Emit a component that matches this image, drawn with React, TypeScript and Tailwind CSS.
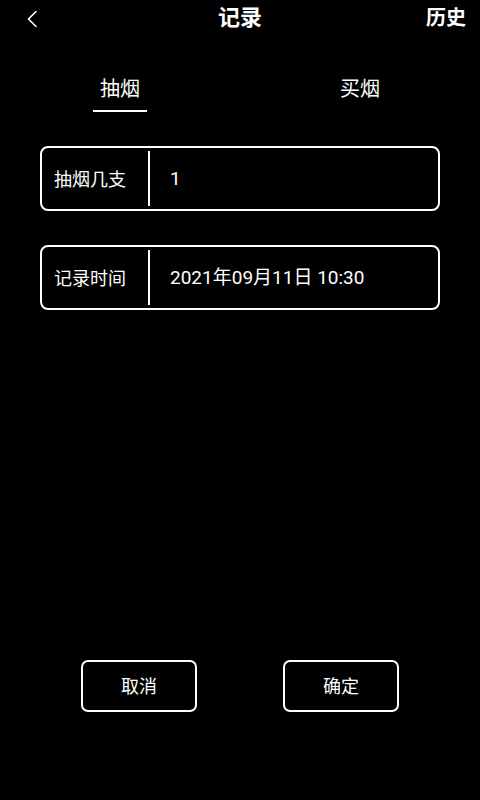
import { useState } from "react";

const font = { fontFamily: 'Roboto, "Noto Sans CJK SC", "Noto Sans", sans-serif' };

const Field = ({ label, value }: { label: string; value: string }) => (
  <div className="mx-[40px] flex h-[65px] items-center rounded-[8px] border-2 border-white">
    <div className="w-[106px] pl-[12px] pt-[2px] text-[18px] text-white">{label}</div>
    <div className="h-[55px] w-[2px] bg-white" />
    <div className="pl-[20px] pt-[2px] text-[19px] text-white">{value}</div>
  </div>
);

export default function App() {
  const [tab, setTab] = useState(0);
  const tabs = ["抽烟", "买烟"];

  return (
    <div className="flex h-[800px] w-[480px] flex-col bg-black text-white" style={font}>
      {/* header */}
      <div className="relative flex h-[38px] items-center justify-center">
        <svg className="absolute left-[26px] top-[10px]" width="12" height="18" viewBox="0 0 12 18" fill="none">
          <path d="M10 1.5 L2.5 9 L10 16.5" stroke="white" strokeWidth="1.6" strokeLinecap="round" strokeLinejoin="round" />
        </svg>
        <span className="-mt-[2px] text-[22px] font-bold leading-none">记录</span>
        <span className="absolute right-[14px] top-[8px] text-[20px] font-bold leading-none">历史</span>
      </div>

      {/* tabs */}
      <div className="mt-[37px] grid grid-cols-2">
        {tabs.map((t, i) => (
          <button key={t} onClick={() => setTab(i)} className="flex flex-col items-center">
            <span className="text-[20px] leading-[28px]">{t}</span>
            <span className={`mt-[7px] h-[2px] w-[54px] ${tab === i ? "bg-white" : "bg-transparent"}`} />
          </button>
        ))}
      </div>

      <div className="mt-[34px] flex flex-col gap-[34px]">
        <Field label="抽烟几支" value="1" />
        <Field label="记录时间" value="2021年09月11日 10:30" />
      </div>

      <div className="flex-1" />

      <div className="mb-[88px] flex justify-center gap-[86px]">
        <button className="h-[52px] w-[116px] rounded-[7px] border-2 border-white text-[18px]">取消</button>
        <button className="h-[52px] w-[116px] rounded-[7px] border-2 border-white text-[18px]">确定</button>
      </div>
    </div>
  );
}
